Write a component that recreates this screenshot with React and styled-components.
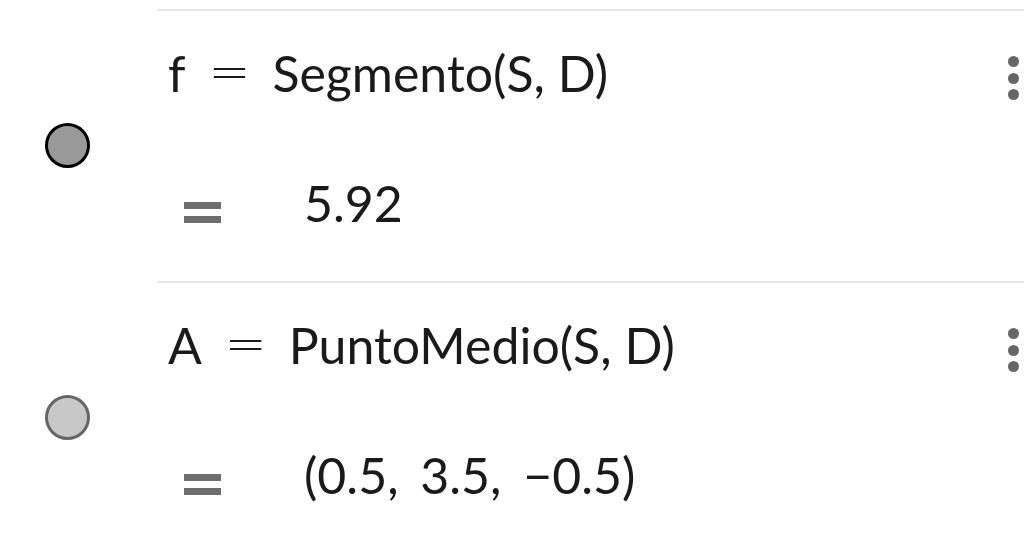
import React from 'react';
import styled, { createGlobalStyle } from 'styled-components';

const GlobalStyle = createGlobalStyle`
  html, body {
    margin: 0;
    padding: 0;
    background: #fff;
    overflow: hidden;
  }
  body {
    font-family: 'Lato', 'Liberation Sans', sans-serif;
    color: #1a1a1a;
  }
`;

const AlgebraView = styled.div`
  display: flex;
  flex-direction: column;
  padding-top: 9px;
  width: 1024px;
  height: 550px;
`;

const Row = styled.div`
  display: flex;
  height: 272px;
  flex-shrink: 0;
`;

const MarbleCell = styled.div`
  width: 157px;
  flex-shrink: 0;
  display: flex;
  align-items: center;
  justify-content: center;
  padding-right: 22px;
  box-sizing: border-box;
`;

const Marble = styled.div`
  width: 45px;
  height: 45px;
  border-radius: 50%;
  box-sizing: border-box;
  border: 3px solid ${(p) => (p.$on ? '#000' : '#666')};
  background: ${(p) => (p.$on ? '#999' : '#c8c8c8')};
`;

const Content = styled.div`
  flex: 1;
  display: flex;
  border-top: 2px solid #e6e6e6;
`;

const Lines = styled.div`
  flex: 1;
  padding-left: 11px;
  display: flex;
  flex-direction: column;
`;

const Definition = styled.div`
  font-size: 50px;
  line-height: 60px;
  margin-top: 32px;
  white-space: pre;
  display: flex;
  align-items: baseline;
`;

const Eq = styled.span`
  display: inline-block;
  font-family: 'DejaVu Sans', sans-serif;
  font-weight: 200;
  font-size: 50px;
  margin: 0 22px 0 23px;
  transform: translateY(-3px);
`;

const Output = styled.div`
  display: flex;
  align-items: flex-start;
  margin-top: 68px;
  padding-left: 16px;
`;

const OutputSign = styled.span`
  display: inline-flex;
  flex-direction: column;
  justify-content: space-between;
  width: 37px;
  height: 21px;
  margin-top: 29px;
  &::before,
  &::after {
    content: '';
    height: 7px;
    background: #6e6e6e;
  }
`;

const Value = styled.span`
  font-size: 50px;
  line-height: 60px;
  margin-left: 83px;
  white-space: pre;
  word-spacing: 9px;
`;

const MenuButton = styled.button`
  width: 30px;
  height: 44px;
  margin-top: 45px;
  padding: 0;
  border: none;
  background: transparent;
  display: flex;
  flex-direction: column;
  align-items: center;
  justify-content: space-between;
  transform: translateX(4px);
`;

const Dot = styled.span`
  width: 11px;
  height: 11px;
  border-radius: 50%;
  background: #666;
`;

const Menu = () => (
  <MenuButton aria-label="Más">
    <Dot />
    <Dot />
    <Dot />
  </MenuButton>
);

const items = [
  { name: 'f', def: 'Segmento(S, D)', value: '5.92', on: true },
  { name: 'A', def: 'PuntoMedio(S, D)', value: '(0.5, 3.5, \u22120.5)', on: false },
];

export default function App() {
  return (
    <>
      <GlobalStyle />
      <AlgebraView>
        {items.map((it) => (
          <Row key={it.name}>
            <MarbleCell>
              <Marble $on={it.on} />
            </MarbleCell>
            <Content>
              <Lines>
                <Definition>
                  <span>{it.name}</span>
                  <Eq>=</Eq>
                  <span>{it.def}</span>
                </Definition>
                <Output>
                  <OutputSign />
                  <Value>{it.value}</Value>
                </Output>
              </Lines>
              <Menu />
            </Content>
          </Row>
        ))}
      </AlgebraView>
    </>
  );
}
